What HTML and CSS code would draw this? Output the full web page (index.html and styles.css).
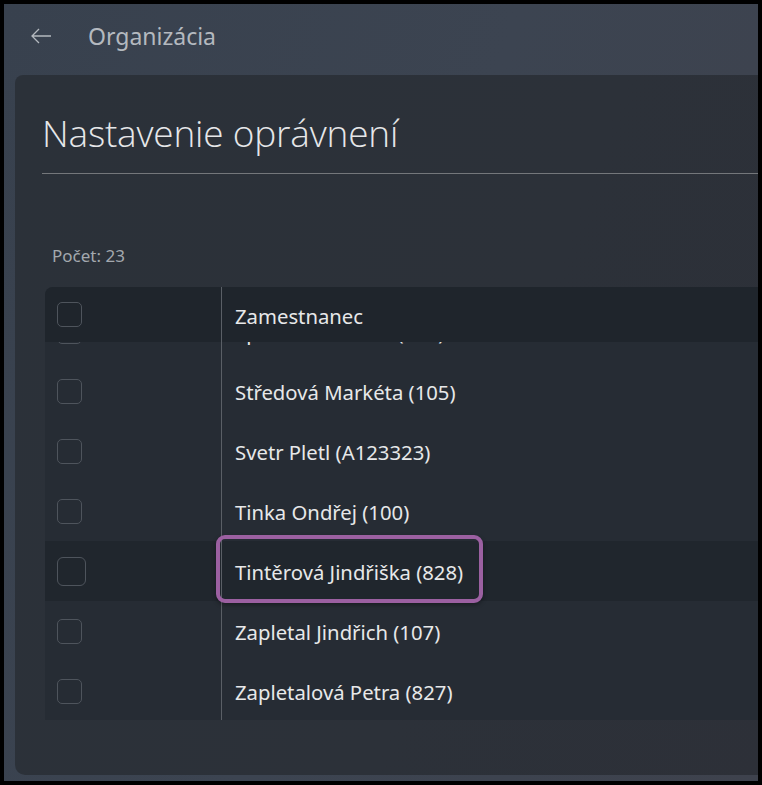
FILE: index.html
```html
<!DOCTYPE html>
<html lang="sk">
<head>
  <meta charset="UTF-8">
  <meta name="viewport" content="width=device-width, initial-scale=1.0">
  <title>Nastavenie oprávnení</title>
  <link rel="stylesheet" href="styles.css">
</head>
<body>

  <div class="window">
    <div class="topbar">
      <svg class="back" width="22" height="16" viewBox="0 0 22 16">
        <path d="M21 8H2M9 1L2 8l7 7" fill="none" stroke="#b4b9bf" stroke-width="1.3"/>
      </svg>
      <span class="page-name">Organizácia</span>
    </div>

    <div class="card">
      <h1 class="title">Nastavenie oprávnení</h1>

      <div class="count">Počet: 23</div>

      <div class="grid">
        <div class="grid-head">
          <div class="cell-check"><span class="checkbox"></span></div>
          <div class="cell-name">Zamestnanec</div>
        </div>

        <div class="grid-body">
          <div class="rows">
            <div class="row">
              <div class="cell-check"><span class="checkbox"></span></div>
              <div class="cell-name">Spurná Veronika (108)</div>
            </div>
            <div class="row">
              <div class="cell-check"><span class="checkbox"></span></div>
              <div class="cell-name">Středová Markéta (105)</div>
            </div>
            <div class="row">
              <div class="cell-check"><span class="checkbox"></span></div>
              <div class="cell-name">Svetr Pletl (A123323)</div>
            </div>
            <div class="row">
              <div class="cell-check"><span class="checkbox"></span></div>
              <div class="cell-name">Tinka Ondřej (100)</div>
            </div>
            <div class="row hover">
              <div class="cell-check"><span class="checkbox big"></span></div>
              <div class="cell-name">
                <span class="focus-ring"></span>
                Tintěrová Jindřiška (828)
              </div>
            </div>
            <div class="row">
              <div class="cell-check"><span class="checkbox"></span></div>
              <div class="cell-name">Zapletal Jindřich (107)</div>
            </div>
            <div class="row">
              <div class="cell-check"><span class="checkbox"></span></div>
              <div class="cell-name">Zapletalová Petra (827)</div>
            </div>
          </div>
        </div>
      </div>
    </div>
  </div>

</body>
</html>
```

FILE: styles.css
```css
html, body {
  margin: 0;
  background: #000;
}

body {
  padding: 4px;
  font-family: "Noto Sans", "Open Sans", sans-serif;
}

.window {
  height: 777px;
  overflow: hidden;
  background: linear-gradient(110deg, #38414e 0%, #3c4451 50%, #3e424d 100%);
  display: flex;
  flex-direction: column;
}

.topbar {
  height: 71px;
  display: flex;
  align-items: center;
  padding-left: 26px;
  box-sizing: border-box;
  padding-bottom: 7px;
}

.back {
  display: block;
}

.page-name {
  margin-left: 36px;
  font-size: 23px;
  color: #b4b9bf;
}

.card {
  margin-left: 11px;
  margin-right: -20px;
  height: 700px;
  background: linear-gradient(110deg, #2b3139 0%, #2c3139 60%, #2d3038 100%);
  border-radius: 8px 0 0 10px;
  padding-left: 30px;
  box-sizing: border-box;
  overflow: hidden;
}

.title {
  margin: 0 0 0 -3px;
  padding-top: 34px;
  height: 64px;
  border-bottom: 1px solid #74777b;
  font-family: "Open Sans", sans-serif;
  font-weight: 300;
  font-size: 37px;
  line-height: 48px;
  color: #e6e7e9;
  letter-spacing: -0.2px;
}

.count {
  margin-top: 72px;
  padding-left: 7px;
  font-size: 17px;
  line-height: 20px;
  color: #a3a8ae;
}

.grid {
  margin-top: 21px;
  height: 433px;
  display: flex;
  flex-direction: column;
  border-radius: 8px 0 0 0;
  overflow: hidden;
  background: #262c34;
}

.grid-head {
  height: 55px;
  flex: none;
  display: flex;
  background: #1f252c;
}

.grid-body {
  flex: 1;
  overflow: hidden;
}

.rows {
  margin-top: -41px;
}

.row {
  height: 60px;
  display: flex;
}

.row.hover {
  background: #20262d;
}

.cell-check {
  width: 177px;
  flex: none;
  display: flex;
  align-items: center;
  padding-left: 12px;
  box-sizing: border-box;
  border-right: 1px solid #5a5f66;
}

.cell-name {
  position: relative;
  display: flex;
  align-items: center;
  padding-left: 13px;
  padding-top: 2px;
  font-size: 20.3px;
  color: #e7e8e9;
  white-space: nowrap;
}

.grid-head .cell-name {
  padding-top: 2px;
}

.checkbox {
  display: block;
  width: 23px;
  height: 23px;
  border: 1px solid #4e545c;
  border-radius: 5px;
}

.checkbox.big {
  width: 27px;
  height: 27px;
  border-radius: 6px;
}

.focus-ring {
  position: absolute;
  left: -6px;
  top: -6px;
  width: 267px;
  height: 68px;
  border: 4px solid #9b60a1;
  border-radius: 9px;
  box-sizing: border-box;
  box-shadow: 0 2px 4px rgba(0, 0, 0, 0.35);
  pointer-events: none;
}
```
